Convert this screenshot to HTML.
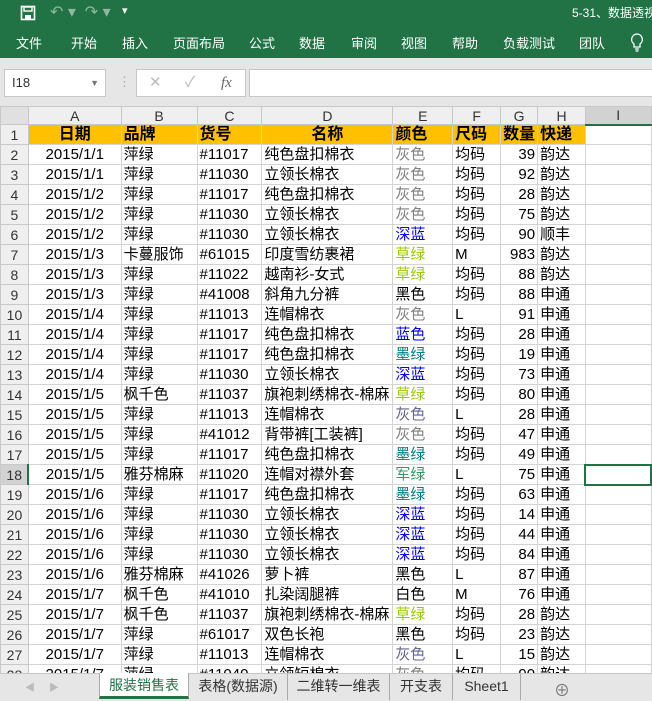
<!DOCTYPE html>
<html><head><meta charset="utf-8"><style>
*{margin:0;padding:0;box-sizing:border-box}
body{width:652px;height:701px;overflow:hidden;background:#e6e6e6;font-family:"Liberation Sans","Noto Sans CJK SC",sans-serif;position:relative}
.title{position:absolute;left:0;top:0;width:652px;height:58px;background:#217346;color:#fff}
.t{position:absolute;font-size:13px;color:#fff;white-space:nowrap}
.fb{position:absolute;background:#fff;border:1px solid #c6c6c6}
table{position:absolute;left:0;top:106px;border-collapse:collapse;table-layout:fixed;background:#fff}
td{border:1px solid #d4d4d4;height:20px;font-size:15px;white-space:nowrap;overflow:hidden;padding:0 2px;line-height:18px;font-family:"Liberation Sans","Noto Sans CJK SC",sans-serif}
tr.h td{height:18px;line-height:16px;background:#efefef;text-align:center;font-size:14px;color:#333;border-color:#c8c8c8}
td.r{background:#efefef;text-align:center;font-size:14px;color:#333;border-color:#c8c8c8;padding:0}
tr.y td{background:#ffc000;font-weight:bold;font-size:16px}
tr.y td.r{background:#efefef;font-weight:normal;font-size:14px}
.c{text-align:center}.rt{text-align:right}
.g{color:#808080}.p{color:#666699}.b{color:#0000ff}.cg{color:#99cc00}.m{color:#008080}.j{color:#339966}
.tabs{position:absolute;left:0;top:673px;width:652px;height:28px;background:#e6e6e6;border-top:1px solid #c6c6c6;font-size:14px;color:#333}
.tab{position:absolute;top:0;height:26px;line-height:24px;text-align:center;border-right:1px solid #aaa}
</style></head><body>
<div class="title">
<svg style="position:absolute;left:20px;top:5px" width="16" height="16" viewBox="0 0 16 16"><rect x="1.5" y="1.5" width="13" height="13" fill="none" stroke="#fff" stroke-width="1.6"/><rect x="4" y="2" width="8" height="4" fill="none" stroke="#fff" stroke-width="1.4"/><rect x="5" y="10" width="6" height="4" fill="#fff"/></svg>
<div class="t" style="left:50px;top:2px;font-size:16px;color:#8fb8a0">↶ ▾&nbsp; ↷ ▾</div>
<div class="t" style="left:122px;top:4px;font-size:11px">▾</div>
<div class="t" style="left:572px;top:4px;font-size:12px">5-31、数据透视</div>
<div class="t" style="left:16px;top:33px">文件</div>
<div class="t" style="left:71px;top:33px">开始</div>
<div class="t" style="left:122px;top:33px">插入</div>
<div class="t" style="left:173px;top:33px">页面布局</div>
<div class="t" style="left:249px;top:33px">公式</div>
<div class="t" style="left:299px;top:33px">数据</div>
<div class="t" style="left:351px;top:33px">审阅</div>
<div class="t" style="left:401px;top:33px">视图</div>
<div class="t" style="left:452px;top:33px">帮助</div>
<div class="t" style="left:503px;top:33px">负载测试</div>
<div class="t" style="left:579px;top:33px">团队</div>
<svg style="position:absolute;left:630px;top:33px" width="14" height="20" viewBox="0 0 14 20"><path d="M7 1a5.5 5.5 0 0 0-3 10v3h6v-3a5.5 5.5 0 0 0-3-10z" fill="none" stroke="#fff" stroke-width="1.3"/><path d="M5 16h4M5.5 18h3" stroke="#fff" stroke-width="1.2"/></svg>
</div>
<div class="fb" style="left:4px;top:69px;width:102px;height:28px;font-size:13px;line-height:26px;padding-left:7px;color:#333">I18<span style="position:absolute;right:6px;font-size:9px;color:#777">▼</span></div>
<div class="t" style="left:118px;top:74px;color:#aaa">⋮</div>
<div class="fb" style="left:136px;top:69px;width:110px;height:28px;color:#bbb;font-size:15px;line-height:26px"><span style="position:absolute;left:12px">✕</span><span style="position:absolute;left:48px">✓</span><span style="position:absolute;left:84px;color:#666;font-style:italic;font-family:'Liberation Serif',serif">fx</span></div>
<div class="fb" style="left:249px;top:69px;width:410px;height:28px"></div>
<table>
<colgroup><col style="width:28px"><col style="width:93px"><col style="width:76px"><col style="width:65px"><col style="width:131px"><col style="width:60px"><col style="width:48px"><col style="width:37px"><col style="width:48px"><col style="width:66px"></colgroup>
<tr class="h"><td style="background:#e0e0e0"></td><td>A</td><td>B</td><td>C</td><td>D</td><td>E</td><td>F</td><td>G</td><td>H</td><td style="background:#d2d2d2;border-bottom:2px solid #217346">I</td></tr>
<tr class="y"><td class="r">1</td><td class="c">日期</td><td>品牌</td><td>货号</td><td class="c">名称</td><td>颜色</td><td>尺码</td><td>数量</td><td>快递</td><td style="background:#fff"></td></tr>
<tr><td class="r">2</td><td class="c">2015/1/1</td><td>萍绿</td><td>#11017</td><td>纯色盘扣棉衣</td><td class="g">灰色</td><td>均码</td><td class="rt">39</td><td>韵达</td><td></td></tr>
<tr><td class="r">3</td><td class="c">2015/1/1</td><td>萍绿</td><td>#11030</td><td>立领长棉衣</td><td class="g">灰色</td><td>均码</td><td class="rt">92</td><td>韵达</td><td></td></tr>
<tr><td class="r">4</td><td class="c">2015/1/2</td><td>萍绿</td><td>#11017</td><td>纯色盘扣棉衣</td><td class="g">灰色</td><td>均码</td><td class="rt">28</td><td>韵达</td><td></td></tr>
<tr><td class="r">5</td><td class="c">2015/1/2</td><td>萍绿</td><td>#11030</td><td>立领长棉衣</td><td class="g">灰色</td><td>均码</td><td class="rt">75</td><td>韵达</td><td></td></tr>
<tr><td class="r">6</td><td class="c">2015/1/2</td><td>萍绿</td><td>#11030</td><td>立领长棉衣</td><td class="b">深蓝</td><td>均码</td><td class="rt">90</td><td>顺丰</td><td></td></tr>
<tr><td class="r">7</td><td class="c">2015/1/3</td><td>卡蔓服饰</td><td>#61015</td><td>印度雪纺裹裙</td><td class="cg">草绿</td><td>M</td><td class="rt">983</td><td>韵达</td><td></td></tr>
<tr><td class="r">8</td><td class="c">2015/1/3</td><td>萍绿</td><td>#11022</td><td>越南衫-女式</td><td class="cg">草绿</td><td>均码</td><td class="rt">88</td><td>韵达</td><td></td></tr>
<tr><td class="r">9</td><td class="c">2015/1/3</td><td>萍绿</td><td>#41008</td><td>斜角九分裤</td><td>黑色</td><td>均码</td><td class="rt">88</td><td>申通</td><td></td></tr>
<tr><td class="r">10</td><td class="c">2015/1/4</td><td>萍绿</td><td>#11013</td><td>连帽棉衣</td><td class="g">灰色</td><td>L</td><td class="rt">91</td><td>申通</td><td></td></tr>
<tr><td class="r">11</td><td class="c">2015/1/4</td><td>萍绿</td><td>#11017</td><td>纯色盘扣棉衣</td><td class="b">蓝色</td><td>均码</td><td class="rt">28</td><td>申通</td><td></td></tr>
<tr><td class="r">12</td><td class="c">2015/1/4</td><td>萍绿</td><td>#11017</td><td>纯色盘扣棉衣</td><td class="m">墨绿</td><td>均码</td><td class="rt">19</td><td>申通</td><td></td></tr>
<tr><td class="r">13</td><td class="c">2015/1/4</td><td>萍绿</td><td>#11030</td><td>立领长棉衣</td><td class="b">深蓝</td><td>均码</td><td class="rt">73</td><td>申通</td><td></td></tr>
<tr><td class="r">14</td><td class="c">2015/1/5</td><td>枫千色</td><td>#11037</td><td>旗袍刺绣棉衣-棉麻</td><td class="cg">草绿</td><td>均码</td><td class="rt">80</td><td>申通</td><td></td></tr>
<tr><td class="r">15</td><td class="c">2015/1/5</td><td>萍绿</td><td>#11013</td><td>连帽棉衣</td><td class="p">灰色</td><td>L</td><td class="rt">28</td><td>申通</td><td></td></tr>
<tr><td class="r">16</td><td class="c">2015/1/5</td><td>萍绿</td><td>#41012</td><td>背带裤[工装裤]</td><td class="g">灰色</td><td>均码</td><td class="rt">47</td><td>申通</td><td></td></tr>
<tr><td class="r">17</td><td class="c">2015/1/5</td><td>萍绿</td><td>#11017</td><td>纯色盘扣棉衣</td><td class="m">墨绿</td><td>均码</td><td class="rt">49</td><td>申通</td><td></td></tr>
<tr><td class="r" style="background:#d2d2d2;border-right:2px solid #217346">18</td><td class="c">2015/1/5</td><td>雅芬棉麻</td><td>#11020</td><td>连帽对襟外套</td><td class="j">军绿</td><td>L</td><td class="rt">75</td><td>申通</td><td style="border:2px solid #217346"></td></tr>
<tr><td class="r">19</td><td class="c">2015/1/6</td><td>萍绿</td><td>#11017</td><td>纯色盘扣棉衣</td><td class="m">墨绿</td><td>均码</td><td class="rt">63</td><td>申通</td><td></td></tr>
<tr><td class="r">20</td><td class="c">2015/1/6</td><td>萍绿</td><td>#11030</td><td>立领长棉衣</td><td class="b">深蓝</td><td>均码</td><td class="rt">14</td><td>申通</td><td></td></tr>
<tr><td class="r">21</td><td class="c">2015/1/6</td><td>萍绿</td><td>#11030</td><td>立领长棉衣</td><td class="b">深蓝</td><td>均码</td><td class="rt">44</td><td>申通</td><td></td></tr>
<tr><td class="r">22</td><td class="c">2015/1/6</td><td>萍绿</td><td>#11030</td><td>立领长棉衣</td><td class="b">深蓝</td><td>均码</td><td class="rt">84</td><td>申通</td><td></td></tr>
<tr><td class="r">23</td><td class="c">2015/1/6</td><td>雅芬棉麻</td><td>#41026</td><td>萝卜裤</td><td>黑色</td><td>L</td><td class="rt">87</td><td>申通</td><td></td></tr>
<tr><td class="r">24</td><td class="c">2015/1/7</td><td>枫千色</td><td>#41010</td><td>扎染阔腿裤</td><td>白色</td><td>M</td><td class="rt">76</td><td>申通</td><td></td></tr>
<tr><td class="r">25</td><td class="c">2015/1/7</td><td>枫千色</td><td>#11037</td><td>旗袍刺绣棉衣-棉麻</td><td class="cg">草绿</td><td>均码</td><td class="rt">28</td><td>韵达</td><td></td></tr>
<tr><td class="r">26</td><td class="c">2015/1/7</td><td>萍绿</td><td>#61017</td><td>双色长袍</td><td>黑色</td><td>均码</td><td class="rt">23</td><td>韵达</td><td></td></tr>
<tr><td class="r">27</td><td class="c">2015/1/7</td><td>萍绿</td><td>#11013</td><td>连帽棉衣</td><td class="p">灰色</td><td>L</td><td class="rt">15</td><td>韵达</td><td></td></tr>
<tr><td class="r">28</td><td class="c">2015/1/7</td><td>萍绿</td><td>#11040</td><td>立领短棉衣</td><td class="g">灰色</td><td>均码</td><td class="rt">90</td><td>韵达</td><td></td></tr>
</table>
<div class="tabs">
<div class="t" style="left:25px;top:5px;color:#bbb;font-size:10px">◀&nbsp;&nbsp;&nbsp;&nbsp;&nbsp;▶</div>
<div class="tab" style="left:99px;width:90px;background:#fff;color:#217346;border-bottom:3px solid #217346;border-left:1px solid #aaa;top:-1px">服装销售表</div>
<div class="tab" style="left:189px;width:99px">表格(数据源)</div>
<div class="tab" style="left:288px;width:102px">二维转一维表</div>
<div class="tab" style="left:390px;width:63px">开支表</div>
<div class="tab" style="left:453px;width:68px">Sheet1</div>
<div class="t" style="left:554px;top:3px;color:#777;font-size:16px">⊕</div>
</div>
</body></html>
